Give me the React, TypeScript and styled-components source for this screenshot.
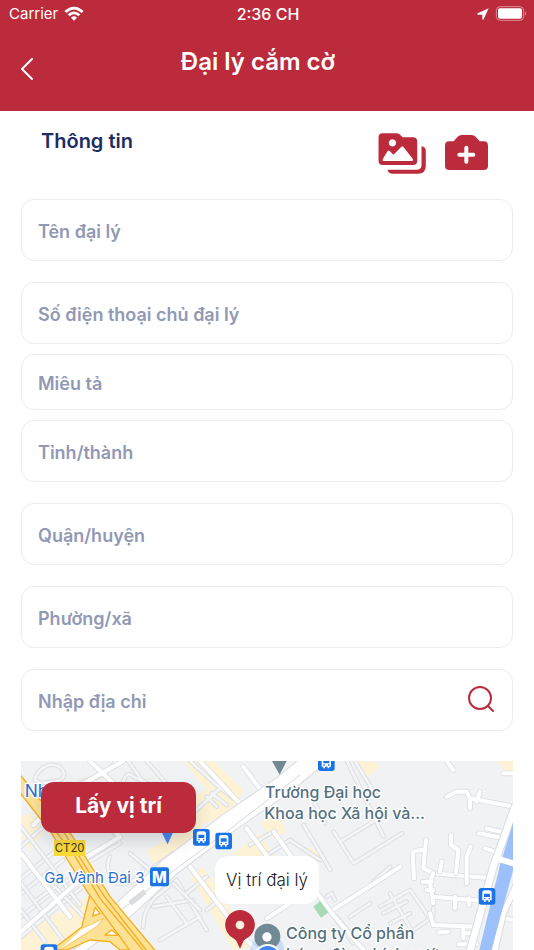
import React from "react";
import styled, { createGlobalStyle } from "styled-components";

const red = "#bc2b3b";

const GlobalStyle = createGlobalStyle`
  * { box-sizing: border-box; }
  body { margin: 0; background: #fff; font-family: Inter, "Noto Sans", sans-serif; }
  button, input { font-family: inherit; }
  button { border: 0; padding: 0; background: none; cursor: pointer; }
  svg { display: block; }
`;

const Screen = styled.div`
  display: flex;
  flex-direction: column;
  min-height: 100vh;
`;

const TopBar = styled.header`
  background: ${red};
  color: #fff;
  padding-bottom: 21px;
`;

const StatusBar = styled.div`
  display: grid;
  grid-template-columns: 1fr auto 1fr;
  align-items: center;
  height: 27px;
  padding: 0 7px 0 9px;
  font-size: 15px;
  line-height: 20px;
`;

const StatusGroup = styled.div<{ $end?: boolean }>`
  display: flex;
  align-items: center;
  gap: 6px;
  justify-content: ${(p) => (p.$end ? "flex-end" : "flex-start")};
`;

const Clock = styled.time`
  font-size: 16px;
  font-weight: 500;
`;

const NavBar = styled.nav`
  display: flex;
  align-items: flex-start;
  padding: 21px 72px 0 0;
`;

const BackButton = styled.button`
  display: grid;
  place-items: center;
  width: 54px;
  height: 42px;
  color: #fff;
`;

const Title = styled.h1`
  flex: 1;
  margin: 0;
  text-align: center;
  font-size: 24px;
  line-height: 28px;
  font-weight: 600;
`;

const Main = styled.main`
  flex: 1;
  display: flex;
  flex-direction: column;
  padding: 0 21px;
`;

const SectionHeader = styled.div`
  display: flex;
  justify-content: space-between;
  align-items: flex-start;
  padding: 18px 25px 0 20px;
  height: 88px;
`;

const SectionTitle = styled.h2`
  margin: 0;
  font-size: 20px;
  line-height: 24px;
  font-weight: 600;
  color: #1c2d64;
`;

const Actions = styled.div`
  display: flex;
  align-items: center;
  gap: 18px;
  padding-top: 4px;
`;

const IconButton = styled.button`
  color: ${red};
`;

const Form = styled.form`
  display: flex;
  flex-direction: column;
  margin-bottom: 30px;
`;

const Field = styled.label<{ $short?: boolean; $tight?: boolean }>`
  display: flex;
  align-items: center;
  height: ${(p) => (p.$short ? 56 : 62)}px;
  margin-bottom: ${(p) => (p.$tight ? 10 : 21)}px;
  padding: 0 17px 0 16px;
  border: 1px solid #ececee;
  border-radius: 13px;
  &:last-child { margin-bottom: 0; }
`;

const TextInput = styled.input`
  flex: 1;
  min-width: 0;
  padding: 3px 0 0;
  border: 0;
  outline: 0;
  background: none;
  font-size: 18px;
  line-height: 24px;
  font-weight: 600;
  color: #1c2d64;
  &::placeholder { color: #9199b5; opacity: 1; }
`;

const MapPanel = styled.section`
  position: relative;
  flex: 1 0 189px;
  height: 189px;
  overflow: hidden;
  background: #f1f2f4;
`;

const MapDrawing = styled.svg`
  position: absolute;
  inset: 0;
  width: 100%;
  height: 100%;
`;

const LocateButton = styled.button`
  position: absolute;
  top: 21px;
  left: 20px;
  width: 155px;
  height: 51px;
  padding-bottom: 4px;
  border-radius: 13px;
  background: ${red};
  color: #fff;
  font-size: 21px;
  line-height: 28px;
  font-weight: 700;
  box-shadow: 0 8px 16px rgba(60, 64, 80, 0.18);
`;

const Callout = styled.div`
  position: absolute;
  top: 95px;
  left: 50%;
  transform: translateX(-50%);
  padding: 12px 11px;
  border-radius: 14px;
  background: #fff;
  color: #222;
  font-size: 17px;
  line-height: 24px;
  font-weight: 300;
  white-space: nowrap;
`;

const WifiIcon = () => (
  <svg width="20" height="15" viewBox="0 0 60 45" fill="#fff" aria-hidden="true">
    <path d="M1 15Q30-11 59 15L53 21Q30 0 7 21Z" />
    <path d="M11 25Q30 8 49 25L43 31Q30 19 17 31Z" />
    <path d="M21 35Q30 27 39 35L30 44Z" />
  </svg>
);

const LocationIcon = () => (
  <svg width="12" height="12" viewBox="0 0 36 36" fill="#fff" aria-hidden="true">
    <path d="M35 1L20 34Q17 37 16 33V20H3Q-1 19 2 16Z" />
  </svg>
);

const BatteryIcon = () => (
  <svg width="32" height="15" viewBox="0 0 96 45" aria-hidden="true">
    <rect x="4" y="2" width="82" height="41" rx="11" fill="none" stroke="#dc8b94" strokeWidth="3" />
    <rect x="9" y="7" width="72" height="31" rx="6" fill="#fff" />
    <path d="M90 15q6 7 0 15z" fill="#dc8b94" />
  </svg>
);

const BackIcon = () => (
  <svg width="14" height="24" viewBox="0 0 14 24" fill="none" stroke="currentColor" strokeWidth="2" strokeLinecap="round" strokeLinejoin="round" aria-hidden="true">
    <path d="M12 2L2 12l10 10" />
  </svg>
);

const PhotosIcon = () => (
  <svg width="49" height="41" viewBox="54 38 147 124" fill="currentColor" aria-hidden="true">
    <path fillRule="evenodd" d="M67 39h43q7 0 11 5l7 7h31q13 0 13 13v58q0 13-13 13H68q-13 0-13-13V51q0-12 12-12zM97 57a11 11 0 1 0 .1 0zM69 123h88q3 0 2-6l-30-38-4 0-25 25-12-12-5 0-15 25q-1 6 1 6z" />
    <path d="M185 78q13 2 13 14v45q0 24-24 24H98q-13 0-16-12h88q15 0 15-15z" />
  </svg>
);

const CameraIcon = () => (
  <svg width="43" height="37" viewBox="256 45 129 111" aria-hidden="true">
    <path fill="currentColor" d="M306 45h30q7 0 12 5l12 14h12q13 0 13 13v60q0 13-13 13H269q-13 0-13-13V77q0-13 13-13h13l12-14q5-5 12-5z" />
    <path stroke="#fff" strokeWidth="12" strokeLinecap="round" d="M320 83v42M299 104h42" />
  </svg>
);

const SearchIcon = () => (
  <svg width="28" height="28" viewBox="0 0 28 28" fill="none" stroke="currentColor" strokeWidth="2" strokeLinecap="round" aria-hidden="true">
    <circle cx="13" cy="12" r="11" />
    <path d="M21 20l5 5" />
  </svg>
);

const BusStop = ({ x, y }: { x: number; y: number }) => (
  <g transform={`translate(${x} ${y})`}>
    <rect x="-25" y="-25" width="50" height="50" rx="8" fill="#1a73e8" />
    <path fill="#fff" fillRule="evenodd" d="M-14-11q0-7 8-7H6q8 0 8 7v23H9v5H4v-5H-4v5h-5v-5h-5zM-9-8V2H9V-8zM-9 5v4h4V5zM5 5v4h4V5z" />
  </g>
);

const narrowStreets = [
  "M63 290L125 235M63 385L170 300M63 430L190 330M63 500L230 370M63 560L255 405",
  "M63 230L155 350L240 465M63 400L145 510L205 590M63 480L135 575M110 450L165 410L250 500",
  "M245 95L310 75L350 33M385 33L425 90L490 130M370 95Q380 60 400 80L440 100M440 33L560 170",
  "M105 90Q110 60 145 45Q180 40 190 65Q200 90 160 95L120 100Z",
  "M260 340L360 280L330 230M330 320Q310 360 350 400Q400 410 430 360M390 310L450 360L520 310",
  "M430 530Q430 470 480 430L530 390L620 540M480 570L600 500M500 440L560 520M460 470L580 450",
  "M570 33L660 115L540 225M620 140L650 170M635 130L680 165M650 105L700 145",
  "M600 480L520 400M560 430L620 380M620 480L680 430",
  "M740 235L820 340M750 285L820 245M780 330L870 270L960 330",
  "M911 225L991 360M1001 245L1061 340L1206 250M1041 33L1151 260M1065 33L1130 140M1020 275L1120 215M975 220L940 150",
  "M1170 350L1120 395M991 485L1060 580M1010 500L1090 600M980 440L995 430L1005 450",
  "M1140 470L1230 420L1300 520M1170 430L1240 550M1150 490L1220 455M1170 520L1230 490M1050 500L1110 460M1240 540L1300 500V475",
];

const brightStreets = [
  "M991 485L1201 350M1340 140L1370 125L1400 125L1410 145L1530 168M1410 145V175M1440 125L1430 155M1510 70H1539",
  "M1437 250L1510 265M1460 235L1520 250M1455 295L1500 310M1242 385L1238 310Q1240 300 1275 300M1278 270L1270 355L1300 370L1475 385",
  "M1353 255V285L1375 300L1368 370M1412 290L1400 320V400M1325 335L1320 365M1300 370L1290 395L1300 460M1268 395H1295M1280 420H1300M1300 440L1440 452M1365 440V475M1407 445V465",
  "M1290 490L1300 525L1430 530M1318 547L1345 545M1390 530V565M1400 550H1430M1376 583H1430",
  "M1340 33L1360 60M1510 450L1539 458M1510 505L1539 510",
  "M600 33L700 140L740 180M730 50L790 130M821 245L991 485L1091 600M801 505L900 440M570 350L730 560L790 620M740 235L821 345",
  "M100 225L200 130L370 33M63 310L210 500M63 545L240 390M245 330L360 260L300 200M270 33L360 120",
];

const MapArt = () => (
  <MapDrawing viewBox="63 33 1476 567" preserveAspectRatio="xMidYMin slice" role="img" aria-label="Bản đồ">
    <rect x="-1000" y="0" width="4000" height="2000" fill="#f1f2f4" />
    <g fill="#fdf2d3">
      <path d="M63 200L90 190L130 245L90 300L63 250ZM63 540L150 500L215 470L260 440L250 540L190 600H63ZM440 300L500 270L590 210L600 240L510 320L460 340Z" />
      <path d="M550 33H640L730 120L690 190L590 230L520 170L620 120ZM700 310L780 250L870 390L790 430ZM780 220L830 190L860 245L820 265ZM930 290L960 310L940 350L920 330ZM1060 33H1115L1140 50L1105 78ZM1490 33H1539V85ZM570 380L610 350L760 590L700 600Z" />
    </g>
    <g fill="none" strokeLinejoin="round" strokeLinecap="round">
      {narrowStreets.map((d) => (
        <React.Fragment key={d}>
          <path d={d} stroke="#dcdfe3" strokeWidth="14" />
          <path d={d} stroke="#f4f5f6" strokeWidth="8" />
        </React.Fragment>
      ))}
      {brightStreets.map((d) => (
        <React.Fragment key={d}>
          <path d={d} stroke="#dcdfe3" strokeWidth="17" />
          <path d={d} stroke="#fff" strokeWidth="12" />
        </React.Fragment>
      ))}
      <path d="M1545 170L1480 350L1405 620" stroke="#d9dce0" strokeWidth="26" />
      <path d="M1545 170L1480 350L1405 620" stroke="#fff" strokeWidth="20" />
      <path d="M1560 380L1510 490L1480 620" stroke="#d9dce0" strokeWidth="22" />
      <path d="M1560 380L1510 490L1480 620" stroke="#fff" strokeWidth="16" />
    </g>
    <path d="M1545 200L1500 345L1438 600H1474L1545 340Z" fill="#9cc0f9" />
    <path d="M1480 322L1545 342" stroke="#fff" strokeWidth="18" />
    <path d="M940 470L960 453L986 487L963 503Z" fill="#a8dab5" />

    <g fill="none" strokeLinejoin="round">
      <path d="M160 640L370 480L510 350L680 222L850 105L960 15" stroke="#d9dce0" strokeWidth="62" />
      <path d="M160 640L370 480L510 350L680 222L850 105L960 15" stroke="#fff" strokeWidth="56" />
      <path d="M350 490L510 370L680 245L900 75" stroke="#d5d8dc" strokeWidth="3" />
      <path d="M210 600L310 520M390 460L435 425" stroke="#dadcdf" strokeWidth="16" />
    </g>
    <g fill="#fde296" stroke="#f6ad1c" strokeWidth="4" strokeLinejoin="round">
      <path d="M245 532L270 432L330 500L395 565L410 600H360L330 575L270 570L200 600H155Z" />
      <path d="M60 74L125 155L215 255L330 440L466 602H390L265 430L200 325L155 250L60 128Z" />
      <path d="M285 472L300 490L278 498ZM315 555L335 540L355 556Z" fill="#fff" />
      <path d="M140 210L220 310L300 445L430 602M175 220L310 435L440 602" fill="none" />
      <path d="M248 535L310 505L290 530L180 600" fill="#fff" strokeWidth="2" />
    </g>

    <g stroke="#fff" strokeWidth="8" strokeLinejoin="round" paintOrder="stroke" fontFamily="Inter, sans-serif">
      <g fill="#2a6fd0">
        <text x="74" y="140" fontSize="52">Nhà</text>
        <text x="133" y="399" fontSize="45">Ga Vành Đai 3</text>
      </g>
      <g fill="#54707f" fontWeight="500">
        <text x="795" y="143" fontSize="48">Trường Đại học</text>
        <text x="793" y="208" fontSize="48">Khoa học Xã hội và...</text>
        <text x="858" y="567" fontSize="48">Công ty Cổ phần</text>
        <text x="858" y="630" fontSize="48">bóng đèn phích nước</text>
      </g>
    </g>
    <rect x="162" y="270" width="94" height="48" fill="#fbd937" />
    <text x="209" y="306" fontSize="34" textAnchor="middle" fill="#3d3722">CT20</text>
    <rect x="450" y="352" width="57" height="57" rx="8" fill="#1a73e8" />
    <text x="478" y="398" fontSize="47" fontWeight="800" textAnchor="middle" fill="#fff">M</text>
    <path d="M484 245H520L503 283Z" fill="#4285f4" />
    <path d="M816 33H860L839 74Z" fill="#718995" />
    <BusStop x={604} y={262} />
    <BusStop x={671} y={273} />
    <BusStop x={979} y={38} />
    <BusStop x={1461} y={439} />
    <BusStop x={147} y={608} />
    <circle cx="802" cy="600" r="50" fill="#4285f4" opacity=".2" />
    <circle cx="802" cy="560" r="39" fill="#718995" />
    <circle cx="801" cy="561" r="14" fill="#fff" />
    <circle cx="803" cy="624" r="39" fill="#4285f4" stroke="#fff" strokeWidth="6" />
    <path fill={red} d="M720 480a45 45 0 0 1 18 86q-8 4-10 13l-8 17-8-17q-2-9-10-13a45 45 0 0 1 18-86z" />
    <circle cx="720" cy="525" r="13" fill="#fff3df" />
  </MapDrawing>
);

const fields: { name: string; label: string; short?: boolean; tight?: boolean; search?: boolean }[] = [
  { name: "agency", label: "Tên đại lý" },
  { name: "phone", label: "Số điện thoại chủ đại lý", tight: true },
  { name: "description", label: "Miêu tả", short: true, tight: true },
  { name: "province", label: "Tỉnh/thành" },
  { name: "district", label: "Quận/huyện" },
  { name: "ward", label: "Phường/xã" },
  { name: "address", label: "Nhập địa chỉ", search: true },
];

export default function App() {
  return (
    <Screen>
      <GlobalStyle />
      <TopBar>
        <StatusBar>
          <StatusGroup>
            Carrier
            <WifiIcon />
          </StatusGroup>
          <Clock>2:36 CH</Clock>
          <StatusGroup $end>
            <LocationIcon />
            <BatteryIcon />
          </StatusGroup>
        </StatusBar>
        <NavBar>
          <BackButton type="button" aria-label="Quay lại">
            <BackIcon />
          </BackButton>
          <Title>Đại lý cắm cờ</Title>
        </NavBar>
      </TopBar>
      <Main>
        <SectionHeader>
          <SectionTitle>Thông tin</SectionTitle>
          <Actions>
            <IconButton type="button" aria-label="Chọn ảnh">
              <PhotosIcon />
            </IconButton>
            <IconButton type="button" aria-label="Chụp ảnh">
              <CameraIcon />
            </IconButton>
          </Actions>
        </SectionHeader>
        <Form onSubmit={(e) => e.preventDefault()}>
          {fields.map((f) => (
            <Field key={f.name} $short={f.short} $tight={f.tight}>
              <TextInput name={f.name} placeholder={f.label} aria-label={f.label} />
              {f.search && (
                <IconButton type="submit" aria-label="Tìm kiếm">
                  <SearchIcon />
                </IconButton>
              )}
            </Field>
          ))}
        </Form>
        <MapPanel>
          <MapArt />
          <LocateButton type="button">Lấy vị trí</LocateButton>
          <Callout>Vị trí đại lý</Callout>
        </MapPanel>
      </Main>
    </Screen>
  );
}
